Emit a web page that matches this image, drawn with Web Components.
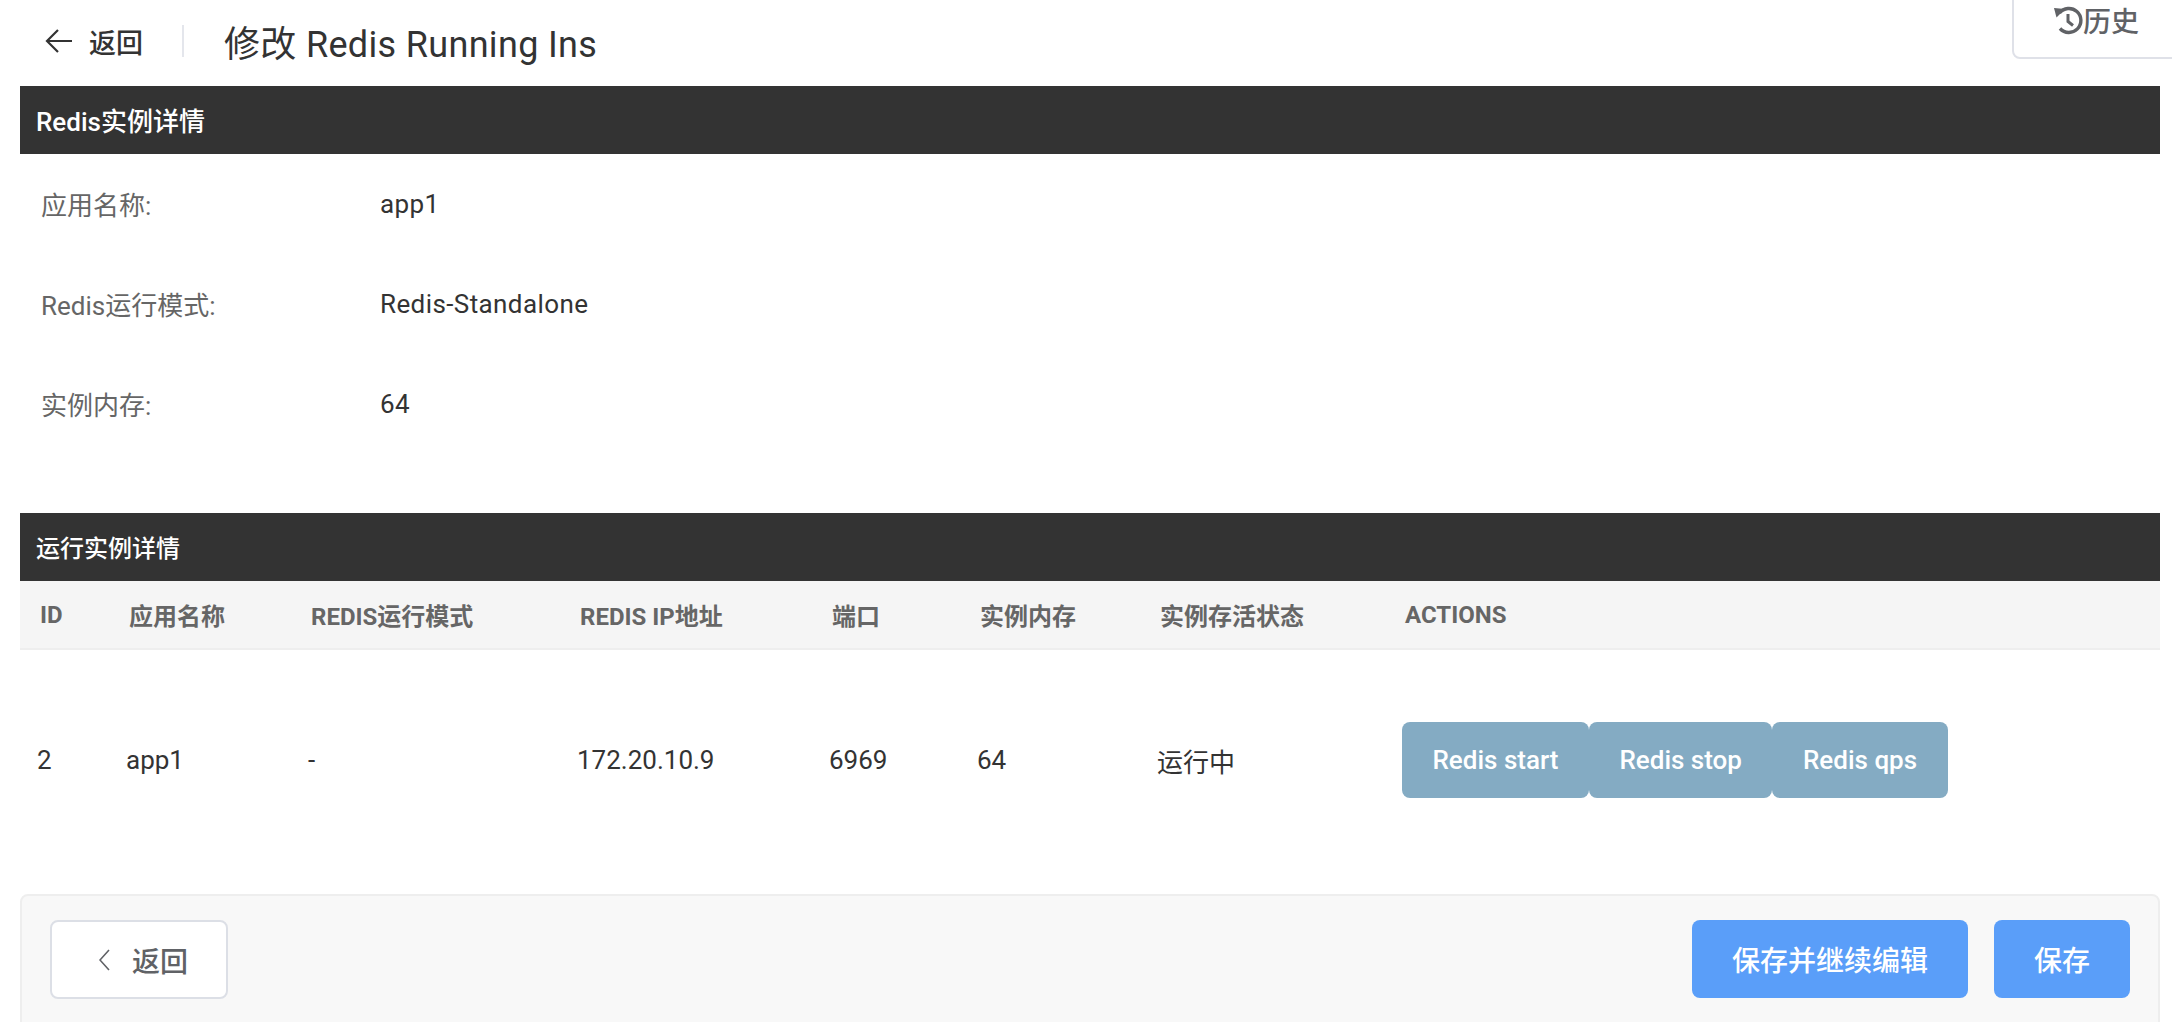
<!DOCTYPE html>
<html lang="zh">
<head>
<meta charset="utf-8">
<title>修改 Redis Running Ins</title>
<style>
  html, body { margin: 0; padding: 0; height: 1022px; overflow: hidden; background: #fff; }
  body { font-family: Roboto, "Noto Sans CJK SC", sans-serif; color: #333; }
</style>
</head>
<body>
<edit-page>
  <page-header title-text="修改 Redis Running Ins"></page-header>
  <section-bar class="first">Redis实例详情</section-bar>
  <detail-list>
    <detail-row label="应用名称:">app1</detail-row>
    <detail-row label="Redis运行模式:">Redis-Standalone</detail-row>
    <detail-row label="实例内存:">64</detail-row>
  </detail-list>
  <section-bar class="second">运行实例详情</section-bar>
  <instance-table></instance-table>
  <form-footer></form-footer>
</edit-page>

<script>
const sheet = (css, html) => `<style>${css}</style>${html}`;
class Base extends HTMLElement {
  constructor() { super(); this.attachShadow({ mode: 'open' }); }
}

customElements.define('edit-page', class extends Base {
  connectedCallback() {
    this.shadowRoot.innerHTML = sheet(`
      :host { display: flex; flex-direction: column; position: relative; padding: 0 12px 0 20px; height: 1022px; box-sizing: border-box; }
      ::slotted(section-bar.second) { margin-top: 59px; }
      ::slotted(section-bar.first) { font-size: 26px; }
    `, `<slot></slot>`);
  }
});

customElements.define('page-header', class extends Base {
  connectedCallback() {
    this.shadowRoot.innerHTML = sheet(`
      :host { display: flex; align-items: center; flex: none; height: 86px; box-sizing: border-box; padding-bottom: 4px; color: #333; }
      .back { display: flex; align-items: center; margin-left: 25px; font-size: 27px; font-weight: 500; color: #333; }
      svg.arrow { width: 28px; height: 28px; margin-right: 16px; }
      .divider { width: 2px; height: 32px; background: #e4e6ec; margin: 0 40px 0 39px; }
      h1 { margin: 0; font-size: 36px; font-weight: 400; letter-spacing: .33px; color: #333; white-space: nowrap; }
      .history { position: absolute; top: -10px; right: -10px; left: 2012px; height: 69px; box-sizing: border-box;
        border: 2px solid #dfe1e8; border-radius: 8px; background: #fff; color: #606266;
        display: flex; align-items: center; padding: 0 0 9px 39px; font-size: 28px; font-weight: 500; }
      .history svg { width: 30px; height: 30px; flex: none; }
    `, `
      <div class="back">
        <svg class="arrow" viewBox="0 0 28 28" fill="none" stroke="#333" stroke-width="2.2">
          <path d="M27 14H2M13 3 2 14l11 11"/>
        </svg>返回
      </div>
      <div class="divider"></div>
      <h1>${this.getAttribute('title-text')}</h1>
      <div class="history">
        <svg viewBox="0 0 30 30" fill="none" stroke="#606266" stroke-width="3.4">
          <path d="M6.5 8A12 12 0 1 1 7 23.5"/>
          <path d="M1 3 12 4 3.5 12.5Z" fill="#606266" stroke="none"/>
          <path d="M15 9v7.5l5 4" stroke-width="3"/>
        </svg><span>历史</span>
      </div>
    `);
  }
});

customElements.define('section-bar', class extends Base {
  connectedCallback() {
    this.shadowRoot.innerHTML = sheet(`
      :host { display: flex; align-items: center; height: 68px; flex: none; background: #333; color: #fff;
        font-size: 24px; font-weight: 500; padding: 0 0 2px 16px; box-sizing: border-box; }
    `, `<slot></slot>`);
  }
});

customElements.define('detail-list', class extends Base {
  connectedCallback() {
    this.shadowRoot.innerHTML = sheet(`:host { display: flex; flex-direction: column; flex: none; }`, `<slot></slot>`);
  }
});

customElements.define('detail-row', class extends Base {
  connectedCallback() {
    this.shadowRoot.innerHTML = sheet(`
      :host { display: grid; grid-template-columns: 339px 1fr; align-items: center; height: 100px; padding-left: 21px; font-size: 26px; letter-spacing: .4px; color: #333; }
      .label { color: #666; font-size: 26px; letter-spacing: 0; position: relative; top: -1px; }
    `, `<div class="label">${this.getAttribute('label')}</div><div><slot></slot></div>`);
  }
});

customElements.define('action-button', class extends Base {
  connectedCallback() {
    this.shadowRoot.innerHTML = sheet(`
      :host { display: inline-flex; align-items: center; justify-content: center; height: 76px; box-sizing: border-box; padding: 0 30.5px;
        background: #84abc3; color: #fff; border-radius: 8px; font-size: 26px; font-weight: 500; white-space: nowrap; }
    `, `<slot></slot>`);
  }
});

customElements.define('instance-table', class extends Base {
  connectedCallback() {
    const cols = '89px 182px 269px 252px 148px 180px 245px 1fr';
    const heads = ['ID','应用名称','REDIS运行模式','REDIS IP地址','端口','实例内存','实例存活状态','ACTIONS'];
    const cells = ['2','app1','-','172.20.10.9','6969','64','运行中'];
    this.shadowRoot.innerHTML = sheet(`
      :host { display: block; flex: none; }
      .head, .row { display: grid; grid-template-columns: ${cols}; align-items: center; }
      .head { height: 69px; box-sizing: border-box; background: #f5f5f5; border-bottom: 2px solid #eee; color: #666; font-size: 24px; font-weight: 700; }
      .head div { padding-left: 20px; }
      .row { height: 220px; font-size: 26px; color: #333; }
      .row > div { padding-left: 17px; }
      .actions { display: flex; }
    `, `
      <div class="head">${heads.map(h => `<div>${h}</div>`).join('')}</div>
      <div class="row">
        ${cells.map(c => `<div>${c}</div>`).join('')}
        <div class="actions">
          <action-button>Redis start</action-button>
          <action-button>Redis stop</action-button>
          <action-button>Redis qps</action-button>
        </div>
      </div>
    `);
  }
});

customElements.define('form-footer', class extends Base {
  connectedCallback() {
    this.shadowRoot.innerHTML = sheet(`
      :host { display: flex; align-items: flex-start; justify-content: space-between; flex: none; margin-top: 24px; height: 140px;
        box-sizing: border-box; padding: 24px 28px 0 28px; background: #f8f8f8; border: 2px solid #eee; border-radius: 8px; }
      .btn { display: flex; align-items: center; justify-content: center; box-sizing: border-box; border-radius: 8px; }
      .ghost { width: 178px; height: 79px; justify-content: flex-start; padding-left: 47px; background: #fff; border: 2px solid #dcdfe6; color: #606266; font-size: 28px; font-weight: 500; }
      .ghost svg { width: 11px; height: 22px; margin-right: 22px; }
      .right { display: flex; gap: 26px; }
      .primary { height: 78px; background: #5a9ef9; color: #fff; font-size: 28px; font-weight: 500; }
      .wide { width: 276px; }
      .narrow { width: 136px; }
    `, `
      <div class="btn ghost">
        <svg viewBox="0 0 11 22" fill="none" stroke="#606266" stroke-width="1.6"><path d="M10 1 1 11l9 10"/></svg>返回
      </div>
      <div class="right">
        <div class="btn primary wide">保存并继续编辑</div>
        <div class="btn primary narrow">保存</div>
      </div>
    `);
  }
});
</script>
</body>
</html>
